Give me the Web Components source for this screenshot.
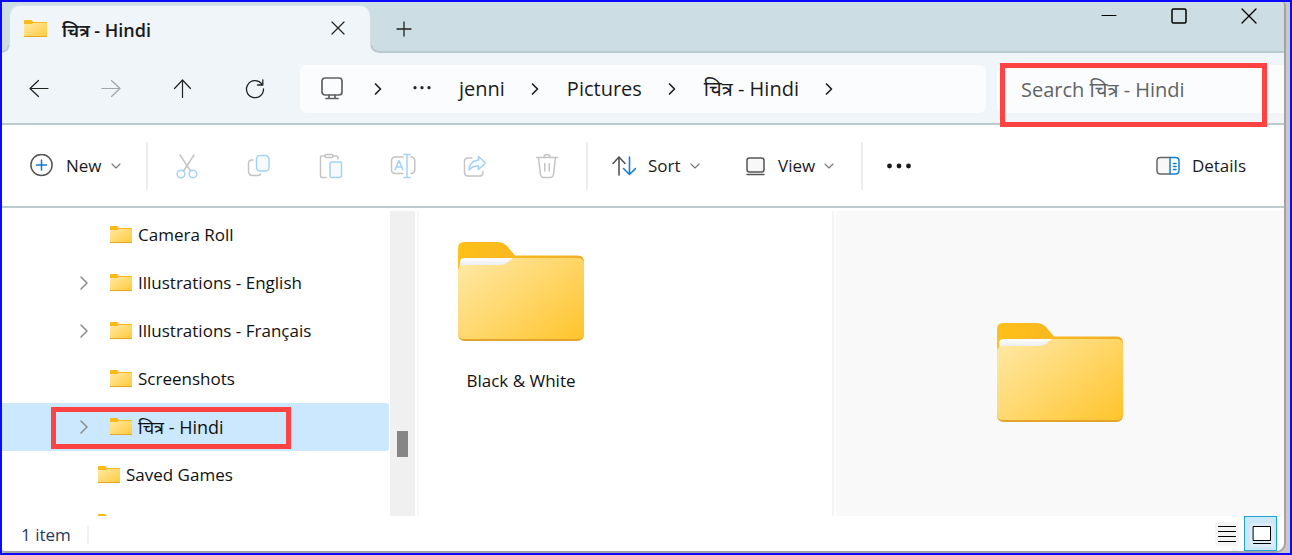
<!DOCTYPE html>
<html lang="en">
<head>
<meta charset="utf-8">
<meta name="viewport" content="width=device-width, initial-scale=1">
<title>चित्र - Hindi</title>
<style>
html, body { margin: 0; height: 100%; }
body { font-family: "Open Sans", "Noto Sans", sans-serif; font-size: 17px; line-height: 24px; color: #1b1b1b; background: #0a0aff; }
</style>
</head>
<body>
<file-explorer></file-explorer>
<script>
const define = (name, markup) => {
  const template = document.createElement('template');
  template.innerHTML = `<style>
    *, ::before, ::after { box-sizing: border-box; }
    :host { box-sizing: border-box; }
    svg { display: block; fill: none; stroke-linecap: round; stroke-linejoin: round; flex: none; }
    button, input { font: inherit; color: inherit; border: 0; padding: 0; margin: 0; background: none; }
    button { display: flex; align-items: center; justify-content: center; white-space: nowrap; }
  </style>` + markup;
  customElements.define(name, class extends HTMLElement {
    constructor() {
      super();
      this.attachShadow({ mode: 'open' }).append(template.content.cloneNode(true));
    }
  });
};

define('folder-small', `
<style>:host { display: block; flex: none; width: 22px; height: 18px; } svg { width: 100%; height: 100%; }</style>
<svg viewBox="0 0 22 18" preserveAspectRatio="none" aria-hidden="true">
  <defs><linearGradient id="g" x1="0" y1="0" x2="1" y2="1"><stop offset="0" stop-color="#ffe9a2"/><stop offset="1" stop-color="#ffca3c"/></linearGradient></defs>
  <path fill="#f9b81c" d="M0 1Q0 0 1 0H7L9 2H22V5H0Z"/>
  <path fill="url(#g)" d="M0 4H7L9 3H22V17H0Z"/>
  <path fill="#e9a824" d="M0 16H22V16.500Q22 17 21.500 17H.5Q0 17 0 16.500Z"/>
</svg>`);

define('folder-large', `
<style>:host { display: block; flex: none; width: 126px; height: 99px; } svg { width: 100%; height: 100%; }</style>
<svg viewBox="0 0 126 99" aria-hidden="true">
  <defs>
    <linearGradient id="front" x1="0" y1="0.100" x2="1" y2="0.900"><stop offset="0" stop-color="#ffe8a3"/><stop offset=".55" stop-color="#ffd565"/><stop offset="1" stop-color="#ffc631"/></linearGradient>
    <linearGradient id="back" x1="0" y1="0" x2="1" y2="0"><stop offset="0" stop-color="#ffc018"/><stop offset="1" stop-color="#efae2a"/></linearGradient>
    <linearGradient id="paper" x1="0" y1="0" x2="0" y2="1"><stop offset="0" stop-color="#ffffff"/><stop offset="1" stop-color="#dfe3e6"/></linearGradient>
  </defs>
  <path fill="url(#back)" d="M0 6Q0 0 6 0H39Q45 0 49 4L57 13.500H120Q126 13.500 126 20V60H0Z"/>
  <path fill="#e2a42b" d="M0 70H126V92Q126 99 119 99H7Q0 99 0 92Z"/>
  <path fill="url(#paper)" d="M2 27V20Q2 16 7 16H62L50 26H2Z"/>
  <path fill="url(#front)" d="M0 29Q0 23 6 23H42Q47 23 51 19L55 16H120Q126 16 126 22V91Q126 97 120 97H6Q0 97 0 91Z"/>
</svg>`);

define('caption-tab', `
<style>
  :host { display: flex; align-items: center; position: relative; flex: 0 1 360px; min-width: 180px; height: 47px; padding-left: 14px; padding-right: 20px; background: #eff5f8; border-radius: 10px 10px 0 0; font-size: 18px; font-weight: 600; box-shadow: 0 -1px 2px #dbe8ed; }
  folder-small { width: 23px; height: 18px; margin-right: 15px; margin-top: -2px; }
  span { flex: 1; white-space: nowrap; }
  button { width: 24px; height: 24px; margin-top: -4px; }
  :host::before, :host::after { content: ""; position: absolute; bottom: 0; width: 8px; height: 8px; }
  :host::before { right: 100%; background: radial-gradient(circle at 0 0, #ccdde3 5px, #b9cbd1 6px, #b9cbd1 7px, #eff5f8 8px); }
  :host::after { left: 100%; background: radial-gradient(circle at 100% 0, #ccdde3 5px, #b9cbd1 6px, #b9cbd1 7px, #eff5f8 8px); }
</style>
<folder-small></folder-small><span><slot></slot></span>
<button aria-label="Close tab"><svg width="14" height="14" viewBox="0 0 14 14" stroke="#222" stroke-width="1.200"><path d="M1 1L13 13M13 1L1 13"/></svg></button>`);

define('title-strip', `
<style>
  :host { display: flex; height: 51px; padding: 4px 0 0 8px; background: linear-gradient(#b9cbd1, #b9cbd1) bottom / 100% 2px no-repeat #ccdde3; }
  .add { width: 68px; height: 46px; }
  .controls { display: flex; margin-left: auto; margin-top: -4px; }
  .controls button { width: 70px; height: 28px; }
</style>
<caption-tab>चित्र - Hindi</caption-tab>
<button class="add" aria-label="New tab"><svg width="16" height="16" viewBox="0 0 16 16" stroke="#222" stroke-width="1.300"><path d="M8 1V15M1 8H15"/></svg></button>
<div class="controls">
  <button aria-label="Minimize"><svg width="16" height="16" viewBox="0 0 16 16" stroke="#000" stroke-width="1"><path d="M1 7.500H15"/></svg></button>
  <button aria-label="Maximize"><svg width="16" height="16" viewBox="0 0 16 16" stroke="#000" stroke-width="1.500"><rect x="1" y="1" width="14" height="14" rx="1.500"/></svg></button>
  <button aria-label="Close"><svg width="16" height="16" viewBox="0 0 16 16" stroke="#000" stroke-width="1.300"><path d="M1 1L15 15M15 1L1 15"/></svg></button>
</div>`);

define('path-crumb', `
<style>
  :host { display: flex; align-items: center; gap: 26px; white-space: nowrap; }
  :host([root]) { gap: 30px; }
  a { color: inherit; text-decoration: none; display: block; }
</style>
<a href="#"><slot></slot></a>
<svg width="8" height="14" viewBox="0 0 8 14" stroke="#222" stroke-width="1.700"><path d="M1.500 2L6.500 7L1.500 12"/></svg>`);

define('address-bar', `
<style>
  :host { display: flex; align-items: center; gap: 28px; flex: 1 1 0; min-width: 0; height: 48px; padding-left: 20px; background: #fbfcfe; border-radius: 7px; font-size: 20px; overflow: hidden; }
  .more { width: 18px; height: 24px; margin-left: 3px; }
</style>
<path-crumb root><svg width="24" height="24" viewBox="0 0 24 24" stroke="#606060" stroke-width="1.700"><rect x="2" y="1" width="20" height="17" rx="3"/><path d="M9 18V21M15 18V21M6 21.500H18"/></svg></path-crumb>
<button class="more" aria-label="More locations"><svg width="18" height="6" viewBox="0 0 18 6"><g fill="#222"><circle cx="2" cy="1.700" r="1.600"/><circle cx="9" cy="1.700" r="1.600"/><circle cx="16" cy="1.700" r="1.600"/></g></svg></button>
<path-crumb>jenni</path-crumb>
<path-crumb>Pictures</path-crumb>
<path-crumb>चित्र - Hindi</path-crumb>`);

define('search-box', `
<style>
  :host { display: block; position: relative; flex: 0 1 287px; min-width: 200px; height: 48px; }
  input { width: 100%; height: 48px; padding-left: 24px; background: #fbfcfe; border-radius: 7px 0 0 7px; font-size: 20px; }
  input::placeholder { color: #626466; opacity: 1; }
  .mark { position: absolute; left: 3px; right: 17px; top: -2px; height: 64px; border: 5px solid #ff4242; pointer-events: none; }
</style>
<input type="search" aria-label="Search" placeholder="Search चित्र - Hindi">
<div class="mark"></div>`);

define('nav-row', `
<style>
  :host { display: flex; align-items: center; height: 72px; padding: 2px 0 2px 1px; background: linear-gradient(#bccbcd, #bccbcd) bottom / 100% 2px no-repeat #eff5f8; }
  nav { display: flex; margin-right: 9px; }
  nav button { width: 72px; height: 48px; }
  search-box { margin-left: 11px; }
</style>
<nav aria-label="History">
  <button aria-label="Back"><svg width="20" height="20" viewBox="0 0 20 20" stroke="#222" stroke-width="1.200"><path d="M19 9.500H1M9.500 1.500L1 9.500L9.500 17.500"/></svg></button>
  <button aria-label="Forward" disabled><svg width="20" height="20" viewBox="0 0 20 20" stroke="#a2a6a8" stroke-width="1.200"><path d="M1 9.500H19M10.500 1.500L19 9.500L10.500 17.500"/></svg></button>
  <button aria-label="Up"><svg width="20" height="20" viewBox="0 0 20 20" stroke="#222" stroke-width="1.200"><path d="M9.500 18.500V1M1.500 9.500L9.500 1L17.500 9.500"/></svg></button>
  <button aria-label="Refresh"><svg width="20" height="20" viewBox="0 0 20 20" stroke="#222" stroke-width="1.300"><path d="M18.500 10A8.500 8.500 0 1 1 16.500 4.700M17.800 .8V6H12.500"/></svg></button>
</nav>
<address-bar></address-bar>
<search-box></search-box>`);

define('tool-button', `
<style>
  :host { display: block; flex: none; }
  button { height: 48px; gap: 12px; }
  .chevron { margin-left: -3px; }
  :host(:not([menu])) .chevron { display: none; }
</style>
<button><slot name="icon"></slot><slot></slot><svg class="chevron" width="10" height="6" viewBox="0 0 10 6" stroke="#777" stroke-width="1.100"><path d="M1 1L5 5L9 1"/></svg></button>`);

define('command-bar', `
<style>
  :host { display: flex; align-items: center; height: 83px; padding: 0 38px 2px 28px; background: linear-gradient(#bccbcd, #bccbcd) bottom / 100% 2px no-repeat #fff; }
  .rule { flex: none; width: 2px; height: 48px; background: #ededed; }
  .new { width: 116px; }
  .edit { display: flex; margin: 0 3px; }
  .edit button { width: 72px; height: 48px; }
  .sort { width: 134px; margin-left: 24px; }
  .view { width: 115px; }
  .more { width: 72px; height: 48px; }
  .details { margin-left: auto; }
</style>
<tool-button class="new" menu><svg slot="icon" width="24" height="24" viewBox="0 0 24 24" stroke="#555" stroke-width="1.500"><circle cx="11.500" cy="11" r="10.600"/><path stroke="#0f78d0" d="M11.500 6V16M6.500 11H16.500"/></svg>New</tool-button>
<span class="rule"></span>
<div class="edit">
  <button aria-label="Cut" disabled><svg width="24" height="26" viewBox="0 0 24 26" stroke="#c4c4c4" stroke-width="1.500"><path d="M5 2L15.500 18M19 2L8.500 18"/><g stroke="#a5d2f4"><circle cx="6" cy="21" r="3.800"/><circle cx="18" cy="21" r="3.800"/></g></svg></button>
  <button aria-label="Copy" disabled><svg width="24" height="24" viewBox="0 0 24 24" stroke="#c4c4c4" stroke-width="1.500"><path d="M6 6H5Q1.500 6 1.500 9.500V17Q1.500 21.500 6 21.500H10Q13 21.500 13.500 20"/><rect x="9.500" y="1.500" width="12.500" height="15.500" rx="3.500" fill="#f7fbfe" stroke="#a5d2f4"/></svg></button>
  <button aria-label="Paste" disabled><svg width="24" height="26" viewBox="0 0 24 26" stroke="#c4c4c4" stroke-width="1.500"><path d="M6 3H2.500Q1.500 3 1.500 4V23Q1.500 24.500 3 24.500H7M14 3H17.500Q19 3 19 5V6"/><rect x="6" y="1.500" width="8" height="3" rx="1.500"/><rect x="11" y="9" width="11.500" height="15.500" rx="2" fill="#f7fbfe" stroke="#a5d2f4"/></svg></button>
  <button aria-label="Rename" disabled><svg width="26" height="26" viewBox="0 0 26 26" stroke="#c4c4c4" stroke-width="1.500"><path d="M13 4H5.500Q1.500 4 1.500 8V16.500Q1.500 20.500 5.500 20.500H13M21 4Q24.800 4 24.800 8V16.500Q24.800 20.500 21 20.500"/><g stroke="#a5d2f4"><path d="M5 17L9 7.500L13 17M6.500 14H11.500M14 1.500H20M17 1.500V24.500M14 24.500H20"/></g></svg></button>
  <button aria-label="Share" disabled><svg width="24" height="24" viewBox="0 0 24 24" stroke="#c4c4c4" stroke-width="1.500"><path d="M9 4H5Q1.500 4 1.500 7.500V18.500Q1.500 22 5 22H16.500Q20 22 20 18.500V17.500"/><path stroke="#a5d2f4" fill="#f7fbfe" d="M15.500 2.500L22.500 9L15.500 15.500V12Q10 11.500 6 16Q6.500 7 15.500 6Z"/></svg></button>
  <button aria-label="Delete" disabled><svg width="24" height="26" viewBox="0 0 24 26" stroke="#c4c4c4" stroke-width="1.500"><path d="M1.500 4.500H22.500M9 4.500Q9 1.500 12 1.500Q15 1.500 15 4.500M3.500 4.500L5.500 21.500Q6 24.500 8.500 24.500H15.500Q18 24.500 18.500 21.500L20.500 4.500M9.800 10.500V18M14.200 10.500V18"/></svg></button>
</div>
<span class="rule"></span>
<tool-button class="sort" menu><svg slot="icon" width="24" height="20" viewBox="0 0 24 20" stroke="#555" stroke-width="1.600"><path d="M7 19V1M1 7.500L7 1L13 7.500"/><path stroke="#1580d8" d="M17.500 1V18.500M11.500 12.500L17.500 18.500L23.500 12.500"/></svg>Sort</tool-button>
<tool-button class="view" menu><svg slot="icon" width="20" height="20" viewBox="0 0 20 20" stroke="#555" stroke-width="1.500"><rect x="1" y="2" width="17" height="14" rx="2.500" fill="#f8f8f8"/><path d="M1 18.500H18"/></svg>View</tool-button>
<span class="rule"></span>
<button class="more" aria-label="See more"><svg width="26" height="6" viewBox="0 0 26 6"><g fill="#1a1a1a"><circle cx="3.500" cy="3" r="2.400"/><circle cx="13" cy="3" r="2.400"/><circle cx="22.500" cy="3" r="2.400"/></g></svg></button>
<tool-button class="details"><svg slot="icon" width="24" height="20" viewBox="0 0 24 20" stroke="#666" stroke-width="1.500"><path fill="#f8f8f8" d="M14 1.500H4.500Q1 1.500 1 5V14.500Q1 18 4.500 18H14"/><path stroke="#1580d8" d="M14 1.500H19.500Q23 1.500 23 5V14.500Q23 18 19.500 18H14ZM17.500 7.500H20M17.500 10.500H20M17.500 13.500H20"/></svg>Details</tool-button>`);

define('tree-item', `
<style>
  :host { display: flex; align-items: center; position: relative; height: 48px; margin-right: 1px; padding-left: 76px; color: #111; }
  :host([level="1"]) { padding-left: 64px; }
  :host([lang="hi"]) { font-size: 18px; }
  :host([selected]) { background: #cce8ff; border-radius: 0 3px 3px 0; }
  .toggle { width: 12px; height: 24px; margin-right: 20px; visibility: hidden; }
  :host([branch]) .toggle { visibility: visible; }
  a { display: flex; align-items: center; gap: 6px; color: inherit; text-decoration: none; white-space: nowrap; }
  .mark { display: none; position: absolute; left: 49px; width: 240px; top: 4px; bottom: 2px; border: 5px solid #ff4242; pointer-events: none; }
  :host([selected]) .mark { display: block; }
</style>
<button class="toggle" aria-label="Expand"><svg width="8" height="14" viewBox="0 0 8 14" stroke="#8c8c8c" stroke-width="1.500"><path d="M1 1L7 7L1 13"/></svg></button>
<a href="#"><folder-small></folder-small><slot></slot></a>
<div class="mark"></div>`);

define('folder-tree', `
<style>
  :host { display: flex; flex: 0 0 417px; min-width: 0; overflow: hidden; border-right: 2px solid #f7f7f7; }
  nav { flex: 1; min-width: 0; }
  .scroll { flex: none; width: 25px; margin-right: 2px; background: #f0f0f0; display: grid; grid-template-rows: 220fr 26px 59fr; justify-items: center; }
  .scroll i { grid-row: 2; width: 11px; background: #868686; }
</style>
<nav aria-label="Folders">
  <tree-item>Camera Roll</tree-item>
  <tree-item branch>Illustrations - English</tree-item>
  <tree-item branch>Illustrations - Français</tree-item>
  <tree-item>Screenshots</tree-item>
  <tree-item branch selected lang="hi">चित्र - Hindi</tree-item>
  <tree-item level="1">Saved Games</tree-item>
  <tree-item level="1"></tree-item>
</nav>
<div class="scroll"><i></i></div>`);

define('file-tile', `
<style>
  :host { display: grid; justify-items: center; width: 142px; text-align: center; row-gap: 28px; color: #111; }
</style>
<folder-large></folder-large><span><slot></slot></span>`);

define('explorer-panes', `
<style>
  :host { display: flex; flex: 1 1 0; min-height: 0; padding-top: 3px; background: #fff; }
  main { flex: 1 1 0; min-width: 0; padding: 31px 0 0 31px; }
  aside { flex: 0 0 452px; display: grid; place-items: center; padding: 18px 0 0 2px; background: #f9f9f9; border-left: 2px solid #f4f4f4; box-shadow: inset 2px 0 #fff; }
</style>
<folder-tree></folder-tree>
<main><file-tile>Black &amp; White</file-tile></main>
<aside aria-label="Preview"><folder-large></folder-large></aside>`);

define('status-bar', `
<style>
  :host { display: flex; align-items: center; height: 35px; padding: 0 7px 0 19px; background: #fff; color: #1f3a5f; }
  .count { padding-right: 16px; border-right: 2px solid #f2f2f2; line-height: 18px; margin-top: 2px; }
  .list { width: 24px; height: 24px; margin-left: auto; margin-right: 5px; background: #f5f5f5; border-radius: 3px; }
  .tiles { width: 33px; height: 35px; background: #cce8f6; border: 1px solid #26a0da; }
  .tiles svg { background: #dcecf8; border-radius: 3px; margin-top: 2px; margin-left: 2px; }
</style>
<span class="count">1 item</span>
<button class="list" aria-label="Details view"><svg width="24" height="24" viewBox="0 0 24 24" stroke="#000" stroke-width="1"><path d="M3.500 4.500H20.500M3.500 9.500H20.500M3.500 14.500H20.500M3.500 19.500H20.500"/></svg></button>
<button class="tiles" aria-label="Large icons view"><svg width="24" height="24" viewBox="0 0 24 24" stroke="#000" stroke-width="1"><rect x="3.500" y="3.500" width="17" height="14" fill="#fff"/><path d="M3.500 20.500H20.500"/></svg></button>`);

define('file-explorer', `
<style>
  :host { display: block; height: 100vh; min-height: 400px; padding: 2px; background: #0a0aff; }
  .desk { height: 100%; padding-right: 4px; background: #c9c9c9; }
  .window { display: flex; flex-direction: column; height: 100%; border: solid #a3a3a3; border-width: 0 2px 2px 0; border-radius: 0 4px 10px 4px; overflow: hidden; }
  .window > * { flex-shrink: 0; }
  nav-row { position: relative; z-index: 1; }
</style>
<div class="desk"><div class="window">
  <title-strip></title-strip>
  <nav-row></nav-row>
  <command-bar></command-bar>
  <explorer-panes></explorer-panes>
  <status-bar></status-bar>
</div></div>`);
</script>
</body>
</html>
